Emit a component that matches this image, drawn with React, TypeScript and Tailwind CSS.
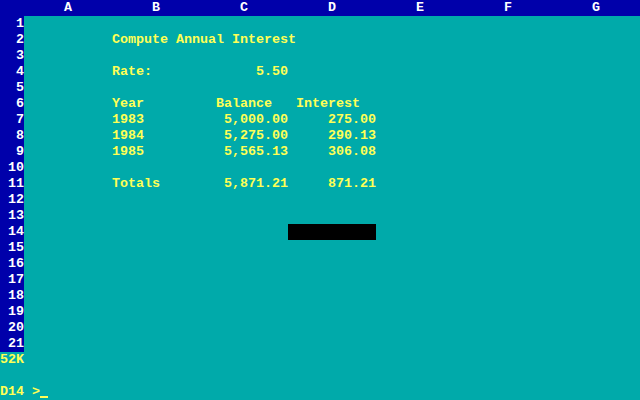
import React from 'react';

const columns = ['A', 'B', 'C', 'D', 'E', 'F', 'G'];

// sheet text, one string per row, starting at column A's left edge
const cells: Record<number, string> = {
  2: '           Compute Annual Interest',
  4: '           Rate:             5.50',
  6: '           Year         Balance   Interest',
  7: '           1983          5,000.00     275.00',
  8: '           1984          5,275.00     290.13',
  9: '           1985          5,565.13     306.08',
  11: '           Totals        5,871.21     871.21',
};

const rows = Array.from({ length: 21 }, (_, i) => i + 1);

export default function App() {
  return (
    <div className="flex h-[400px] w-[640px] flex-col overflow-hidden bg-[#00aaaa] font-['Liberation_Mono',monospace] text-[13.333px] font-bold leading-4 text-[#ffff55]">
      {/* column header */}
      <div className="flex h-4 bg-[#0000aa] text-white">
        <div className="w-6" />
        {columns.map((c) => (
          <div key={c} className="w-[88px] text-center">
            {c}
          </div>
        ))}
      </div>

      {/* rows */}
      {rows.map((r) => (
        <div key={r} className="flex h-4">
          <div className="w-6 bg-[#0000aa] pr-0 text-right text-white">{r}</div>
          {r === 14 ? (
            <div className="flex flex-1">
              <div className="w-[264px]" />
              <div className="w-[88px] bg-black" />
            </div>
          ) : (
            <div className="flex-1 whitespace-pre">{cells[r] ?? ''}</div>
          )}
        </div>
      ))}

      {/* status lines */}
      <div className="h-4 whitespace-pre">52K</div>
      <div className="h-4" />
      <div className="flex h-4 whitespace-pre">
        <span>D14 &gt;</span>
        <span className="mt-[12px] h-[2px] w-2 bg-[#ffff55]" />
      </div>
    </div>
  );
}
